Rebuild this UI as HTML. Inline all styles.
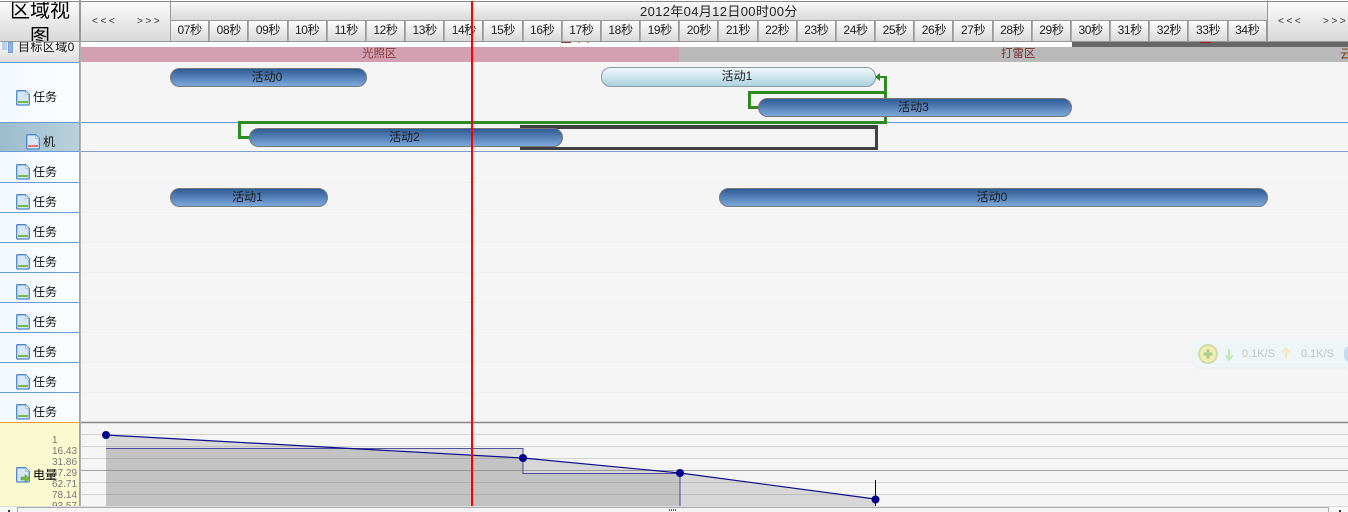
<!DOCTYPE html>
<html><head><meta charset="utf-8"><style>
html,body{margin:0;padding:0;width:1348px;height:512px;overflow:hidden;background:#fff}
body{position:relative;font:12px/14px "Liberation Sans","Noto Sans CJK SC","WenQuanYi Zen Hei",sans-serif;color:#111}
.a{position:absolute}
.hd{background:linear-gradient(#fafafa,#d9d9d9);box-sizing:border-box}
.ticks{position:absolute;left:170px;top:21px;width:1097px;height:20px;display:flex}
.ticks div{flex:1;box-sizing:border-box;height:20px;border-left:1px solid #aaa;border-right:1px solid #999;background:linear-gradient(#fdfdfd,#d8d8d8);text-align:center;line-height:19px;color:#222;white-space:nowrap;letter-spacing:-.4px}
.bar{position:absolute;box-sizing:border-box;height:19px;border:1px solid #777;border-radius:9.5px;background:linear-gradient(#2f5b94,#7da8dc);text-align:center;line-height:16px;color:#1c1c1c;padding-right:3px}
.bar.l{background:linear-gradient(#eef7fa,#add2df);border-color:#8a9a9f;height:20px;line-height:17px}
.row{position:absolute;left:0;width:79px;box-sizing:border-box;border-bottom:1px solid #6a9bd8;background:linear-gradient(90deg,#f4fafe,#fbfcfd)}
.t{position:absolute;left:33px;line-height:14px;color:#111}
.ic{position:absolute;left:16px;width:14px;height:16px}
.gl{position:absolute;left:81px;width:1267px;height:1px;background:#f0f0ec}
.g{position:absolute;background:#2e8b22}
.nav{position:absolute;font-size:10px;letter-spacing:2.6px;color:#333;line-height:12px}
.n{position:absolute;left:52px;font-size:10px;line-height:11px;color:#777;white-space:nowrap}
</style></head><body>
<svg width="0" height="0" style="position:absolute"><defs>
<symbol id="doc" viewBox="0 0 14 16"><path d="M.7 1.700q0-1 1-1H9.500L13.300 4.500V14q0 1-1 1H1.700q-1 0-1-1z" fill="#d6e7f8" stroke="#4f86cb" stroke-width="1.300"/><path d="M9.500 1V4.500H13" fill="#f2f8fd" stroke="#8fb4df" stroke-width=".8"/></symbol>
</defs></svg>

<!-- content area -->
<div class="a" style="left:81px;top:42px;width:1267px;height:464px;background:#f5f5f5"></div>
<div class="a" style="left:81px;top:42px;width:1267px;height:5px;background:#fff"></div>
<div class="a" style="left:1072px;top:41px;width:276px;height:6px;background:#666"></div>
<div class="a" style="left:81px;top:47px;width:598px;height:15px;background:#d3a0b2"></div>
<div class="a" style="left:679px;top:47px;width:669px;height:15px;background:#b9b9b9"></div>
<div class="a" style="left:362px;top:47px;color:#8a3a3a;line-height:14px;font-size:11.5px">光照区</div>
<div class="a" style="left:1001px;top:47px;color:#7a3030;line-height:14px;font-size:11.5px">打雷区</div>
<div class="a" style="left:1340px;top:47px;width:8px;height:15px;overflow:hidden;color:#7a3a10;line-height:14px">云</div>
<div class="a" style="left:561px;top:42px;width:10px;height:1px;background:#8b3a3a"></div>
<div class="a" style="left:578px;top:42px;width:2px;height:1px;background:#c8a080"></div>
<div class="a" style="left:587px;top:42px;width:2px;height:1px;background:#c8a080"></div>
<div class="a" style="left:1200px;top:42px;width:11px;height:1px;background:#a02020"></div>

<!-- row lines -->
<div class="gl" style="top:182px"></div><div class="gl" style="top:212px"></div><div class="gl" style="top:242px"></div><div class="gl" style="top:272px"></div><div class="gl" style="top:302px"></div><div class="gl" style="top:332px"></div><div class="gl" style="top:362px"></div><div class="gl" style="top:392px"></div>
<div class="a" style="left:81px;top:122px;width:1267px;height:1px;background:#6a9bd8"></div>
<div class="a" style="left:81px;top:151px;width:1267px;height:1px;background:#7f9fc8"></div>

<!-- dark outline box -->
<div class="a" style="left:520px;top:125px;width:358px;height:25px;box-sizing:border-box;border:3px solid #404040;border-top-width:4px;border-right-width:3px;border-left:0"></div>

<!-- connectors -->
<div class="g" style="left:238px;top:121px;width:649px;height:3px"></div>
<div class="g" style="left:238px;top:121px;width:3px;height:17px"></div>
<div class="g" style="left:238px;top:136px;width:12px;height:3px"></div>
<div class="g" style="left:884px;top:76px;width:3px;height:48px"></div>
<div class="g" style="left:878px;top:76px;width:9px;height:2px"></div>
<div class="a" style="left:875px;top:73px;width:0;height:0;border-top:4px solid transparent;border-bottom:4px solid transparent;border-right:5px solid #2e8b22"></div>
<div class="g" style="left:748px;top:91px;width:139px;height:3px"></div>
<div class="g" style="left:748px;top:91px;width:3px;height:18px"></div>
<div class="g" style="left:748px;top:106px;width:11px;height:3px"></div>

<!-- bars -->
<div class="bar" style="left:170px;top:68px;width:197px">活动0</div>
<div class="bar l" style="left:601px;top:67px;width:275px">活动1</div>
<div class="bar" style="left:758px;top:98px;width:314px">活动3</div>
<div class="bar" style="left:249px;top:128px;width:314px">活动2</div>
<div class="bar" style="left:170px;top:188px;width:158px">活动1</div>
<div class="bar" style="left:719px;top:188px;width:549px">活动0</div>

<!-- floating widget -->
<div class="a" style="left:1193px;top:341px;width:155px;height:26px;background:#eef5f6;border-radius:5px 0 0 5px;box-shadow:0 1px 2px #e8eeee"></div>
<svg class="a" style="left:1198px;top:344px" width="150" height="20" viewBox="0 0 150 20">
<circle cx="10" cy="10" r="9" fill="#f3eeb0" stroke="#cfdcae" stroke-width="2"/>
<path d="M10 5.500V14.500M5.500 10H14.500" stroke="#a9cc98" stroke-width="3"/>
<path d="M31 5V15M27.500 11.500L31 15.500L34.500 11.500" fill="none" stroke="#c2e6b8" stroke-width="2"/>
<path d="M88 15V5M84.500 8.500L88 4.500L91.500 8.500" fill="none" stroke="#f8e6bc" stroke-width="2"/>
<rect x="146" y="2" width="12" height="16" rx="6" fill="#c6dcec"/>
</svg>
<div class="a" style="left:1242px;top:347px;color:#c4c4c4;font-size:11px">0.1K/S</div>
<div class="a" style="left:1301px;top:347px;color:#c4c4c4;font-size:11px">0.1K/S</div>

<!-- chart -->
<svg class="a" style="left:0;top:420px" width="1348" height="88" viewBox="0 420 1348 88">
<path d="M81 422.500H1348" stroke="#888" stroke-width="1.500"/>
<path d="M81 434.500H1348M81 446.500H1348M81 458.500H1348M81 482.500H1348M81 494.500H1348" stroke="#d2d2d2"/>
<path d="M81 470.500H1348" stroke="#a4a4a4"/>
<path d="M106 435L523 458L680 473L875 499V506H106Z" fill="#808080" fill-opacity=".25"/>
<path d="M106 448.500H523V473.500H680V506H106Z" fill="#808080" fill-opacity=".22"/>
<path d="M106 448.500H523V473.500H680V506" fill="none" stroke="#2a2a8a" stroke-opacity=".8"/>
<path d="M106 435L523 458L680 473L875 499" fill="none" stroke="#0c0c88" stroke-width="1.200"/>
<path d="M875.500 480V506" stroke="#000060"/>
<circle cx="106" cy="435" r="4" fill="#00008b"/><circle cx="523" cy="458" r="4" fill="#00008b"/><circle cx="680" cy="473" r="4" fill="#00008b"/><circle cx="875.500" cy="499.500" r="4" fill="#00008b"/>
</svg>

<!-- left column -->
<div class="row" style="top:62px;height:61px"><svg class="ic" style="top:28px"><use href="#doc"/><rect x="2" y="11" width="10" height="2" fill="#7ab648"/></svg><div class="t" style="top:28px">任务</div></div>
<div class="row" style="top:123px;height:29px;background:linear-gradient(90deg,#9bbccd,#b9d1dc)"><svg class="ic" style="top:11px;left:26px"><use href="#doc"/><rect x="2" y="11" width="10" height="2" fill="#e87070"/></svg><div class="t" style="top:12px;left:43px">机</div></div>
<div class="row" style="top:152px;height:31px"><svg class="ic" style="top:12px"><use href="#doc"/><rect x="2" y="11" width="10" height="2" fill="#7ab648"/></svg><div class="t" style="top:13px">任务</div></div>
<div class="row" style="top:183px;height:30px"><svg class="ic" style="top:11px"><use href="#doc"/><rect x="2" y="11" width="10" height="2" fill="#7ab648"/></svg><div class="t" style="top:12px">任务</div></div>
<div class="row" style="top:213px;height:30px"><svg class="ic" style="top:11px"><use href="#doc"/><rect x="2" y="11" width="10" height="2" fill="#7ab648"/></svg><div class="t" style="top:12px">任务</div></div>
<div class="row" style="top:243px;height:30px"><svg class="ic" style="top:11px"><use href="#doc"/><rect x="2" y="11" width="10" height="2" fill="#7ab648"/></svg><div class="t" style="top:12px">任务</div></div>
<div class="row" style="top:273px;height:30px"><svg class="ic" style="top:11px"><use href="#doc"/><rect x="2" y="11" width="10" height="2" fill="#7ab648"/></svg><div class="t" style="top:12px">任务</div></div>
<div class="row" style="top:303px;height:30px"><svg class="ic" style="top:11px"><use href="#doc"/><rect x="2" y="11" width="10" height="2" fill="#7ab648"/></svg><div class="t" style="top:12px">任务</div></div>
<div class="row" style="top:333px;height:30px"><svg class="ic" style="top:11px"><use href="#doc"/><rect x="2" y="11" width="10" height="2" fill="#7ab648"/></svg><div class="t" style="top:12px">任务</div></div>
<div class="row" style="top:363px;height:30px"><svg class="ic" style="top:11px"><use href="#doc"/><rect x="2" y="11" width="10" height="2" fill="#7ab648"/></svg><div class="t" style="top:12px">任务</div></div>
<div class="row" style="top:393px;height:30px;border-bottom:0"><svg class="ic" style="top:11px"><use href="#doc"/><rect x="2" y="11" width="10" height="2" fill="#7ab648"/></svg><div class="t" style="top:12px">任务</div></div>

<!-- power cell -->
<div class="a" style="left:0;top:422px;width:79px;height:84px;overflow:hidden;background:#fafad0;border-top:1px solid #efa020;box-sizing:border-box">
<div class="n" style="top:12px">1</div>
<div class="n" style="top:23px">16.43</div>
<div class="n" style="top:34px">31.86</div>
<div class="n" style="top:45px">47.29</div>
<div class="n" style="top:56px">62.71</div>
<div class="n" style="top:67px">78.14</div>
<div class="n" style="top:78px">93.57</div>
<svg class="ic" style="top:44px"><use href="#doc"/><path d="M5 10H9V7.500L14 11.500L9 15.500V13H5Z" fill="#7ab648" stroke="#5c9a3a" stroke-width=".5"/></svg>
<div class="t" style="top:45px;color:#000">电量</div>
</div>

<!-- target row -->
<div class="a" style="left:0;top:42px;width:79px;height:21px;overflow:hidden;background:linear-gradient(#f8f8f8,#dcdcdc);border-bottom:1px solid #6a9bd8;box-sizing:border-box">
<div class="a" style="left:2px;top:0;width:5px;height:8px;background:#b8d0f0"></div>
<div class="a" style="left:8px;top:0;width:5px;height:11px;background:#8fb4e4;border:1px solid #7aa0d8;box-sizing:border-box"></div>
<div class="a" style="left:18px;top:-2px;white-space:nowrap;color:#111;line-height:14px;letter-spacing:.4px">目标区域0</div>
</div>

<!-- header -->
<div class="a" style="left:0;top:0;width:1348px;height:42px;background:#fff;overflow:hidden">
<div class="a hd" style="left:0;top:1px;width:79px;height:40px;overflow:hidden;border-top:1px solid #888">
<div class="a" style="left:9px;top:-4px;width:62px;font-size:20px;line-height:26px;text-align:center;color:#000">区域视图</div>
</div>
<div class="a hd" style="left:81px;top:1px;width:89px;height:40px;border-top:1px solid #888"></div>
<div class="a hd" style="left:171px;top:1px;width:1096px;height:20px;border-top:1px solid #888;border-bottom:1px solid #999;text-align:center;font-size:13px;line-height:20px;letter-spacing:.35px;color:#222"><span style="position:absolute;left:469px;top:0;white-space:nowrap">2012年04月12日00时00分</span></div>
<div class="a hd" style="left:1268px;top:1px;width:80px;height:40px;border-top:1px solid #888"></div>
<div class="ticks"><div>07秒</div><div>08秒</div><div>09秒</div><div>10秒</div><div>11秒</div><div>12秒</div><div>13秒</div><div>14秒</div><div>15秒</div><div>16秒</div><div>17秒</div><div>18秒</div><div>19秒</div><div>20秒</div><div>21秒</div><div>22秒</div><div>23秒</div><div>24秒</div><div>25秒</div><div>26秒</div><div>27秒</div><div>28秒</div><div>29秒</div><div>30秒</div><div>31秒</div><div>32秒</div><div>33秒</div><div>34秒</div></div>
<div class="nav" style="left:92px;top:16px">&lt;&lt;&lt;</div><div class="nav" style="left:137px;top:16px">&gt;&gt;&gt;</div>
<div class="nav" style="left:1278px;top:16px">&lt;&lt;&lt;</div><div class="nav" style="left:1323px;top:16px">&gt;&gt;&gt;</div>
<div class="a" style="left:79px;top:0;width:2px;height:42px;background:#999"></div>
<div class="a" style="left:170px;top:0;width:1px;height:42px;background:#999"></div>
<div class="a" style="left:1267px;top:0;width:1px;height:42px;background:#999"></div>
<div class="a" style="left:0;top:41px;width:1348px;height:1px;background:#999"></div>
</div>

<!-- column separator -->
<div class="a" style="left:79px;top:42px;width:2px;height:464px;background:linear-gradient(90deg,#999,#bbb)"></div>

<!-- red time line -->
<div class="a" style="left:471px;top:1px;width:2px;height:505px;background:#f00"></div>

<!-- bottom scrollbar -->
<div class="a" style="left:0;top:506px;width:1348px;height:6px;background:#f8f8f8;border-top:1px solid #ddd;box-sizing:border-box"></div>
<div class="a" style="left:17px;top:507px;width:1312px;height:5px;background:#f4f4f4;border:1px solid #aaa;border-bottom:0;box-sizing:border-box"></div>
<div class="a" style="left:669px;top:509px;width:8px;height:2px;background:repeating-linear-gradient(90deg,#666 0 1px,#eee 1px 2px)"></div>
<div class="a" style="left:8px;top:510px;width:2px;height:2px;background:#333"></div>
<div class="a" style="left:1339px;top:510px;width:2px;height:2px;background:#333"></div>
</body></html>
